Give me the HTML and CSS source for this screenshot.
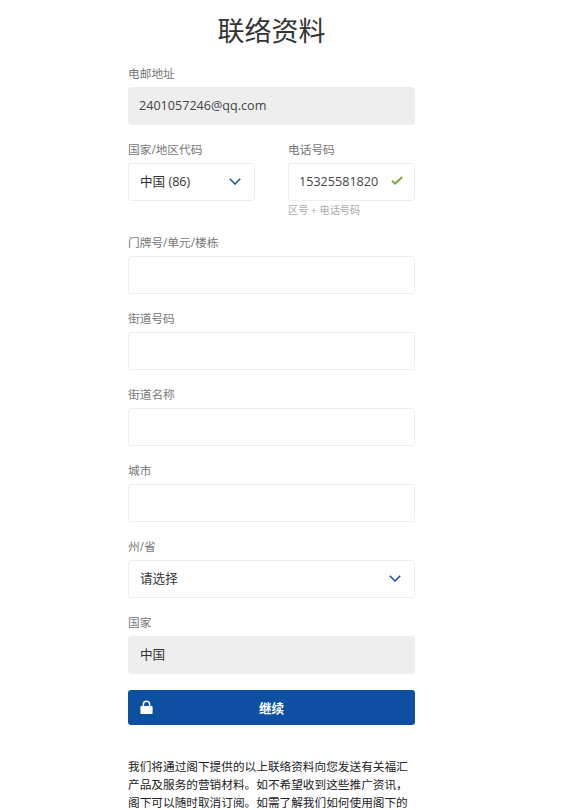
FILE: index.html
```html
<!DOCTYPE html>
<html lang="zh-CN">
<head>
    <meta charset="UTF-8">
    <meta name="viewport" content="width=device-width, initial-scale=1.0">
    <title>联络资料</title>
    <link rel="stylesheet" href="styles.css">
</head>
<body>
    <form class="form">
        <h1 class="title">联络资料</h1>

        <div class="group">
            <div class="label">电邮地址</div>
            <div class="field disabled latin">2401057246@qq.com</div>
        </div>

        <div class="row">
            <div class="group">
                <div class="label">国家/地区代码</div>
                <div class="field select">
                    <span>中国 (86)</span>
                    <svg class="chevron" viewBox="0 0 12 7"><path d="M.8.8 6 6 11.2.8"/></svg>
                </div>
            </div>
            <div class="group">
                <div class="label">电话号码</div>
                <div class="field phone latin">
                    <span>15325581820</span>
                    <svg class="check" viewBox="0 0 12 9"><path d="M1 4.8 4.2 7.6 11.2 1"/></svg>
                </div>
                <div class="hint">区号 + 电话号码</div>
            </div>
        </div>

        <div class="group">
            <div class="label">门牌号/单元/楼栋</div>
            <div class="field"></div>
        </div>
        <div class="group">
            <div class="label">街道号码</div>
            <div class="field"></div>
        </div>
        <div class="group">
            <div class="label">街道名称</div>
            <div class="field"></div>
        </div>
        <div class="group">
            <div class="label">城市</div>
            <div class="field"></div>
        </div>
        <div class="group">
            <div class="label">州/省</div>
            <div class="field select">
                <span>请选择</span>
                <svg class="chevron" viewBox="0 0 12 7"><path d="M.8.8 6 6 11.2.8"/></svg>
            </div>
        </div>
        <div class="group">
            <div class="label">国家</div>
            <div class="field disabled select">中国</div>
        </div>

        <button class="submit" type="button">
            <svg class="lock" viewBox="0 0 13 14"><path d="M2.6 6V4.4a3.9 3.9 0 0 1 7.8 0V6h1.2a1 1 0 0 1 1 1v6a1 1 0 0 1-1 1H1.4a1 1 0 0 1-1-1V7a1 1 0 0 1 1-1zm1.5 0h4.8V4.4a2.4 2.4 0 0 0-4.8 0z"/></svg>
            继续
        </button>

        <p class="notice">我们将通过阁下提供的以上联络资料向您发送有关福汇产品及服务的营销材料。如不希望收到这些推广资讯，阁下可以随时取消订阅。如需了解我们如何使用阁下的</p>
    </form>
</body>
</html>
```

FILE: styles.css
```css
html, body {
    height: 100%;
    overflow: hidden;
}

body {
    margin: 0;
    background: white;
    color: #333;
    font-family: "Open Sans", "Noto Sans CJK SC", sans-serif;
}

.form {
    width: 287px;
    margin-left: 128px;
}

.title {
    height: 65px;
    margin: 0;
    padding-top: 10px;
    box-sizing: border-box;
    text-align: center;
    font-size: 27px;
    font-weight: 400;
    line-height: 42px;
    color: #333;
}

.group {
    margin-bottom: 16px;
}

.label {
    height: 20px;
    margin-bottom: 2px;
    font-size: 11.7px;
    line-height: 16px;
    color: #777;
}

.field {
    display: flex;
    align-items: center;
    height: 38px;
    padding: 0 11px;
    box-sizing: border-box;
    border: 1px solid #eee;
    border-radius: 3px;
    background: white;
    font-size: 12.6px;
    color: #444;
}

.field.disabled {
    background: #eee;
}

.latin {
    padding-left: 10px;
    padding-bottom: 2px;
}

.select {
    justify-content: space-between;
    padding-bottom: 4px;
    color: #333;
}

.select .chevron {
    margin-top: 3px;
}

.phone {
    justify-content: space-between;
}

.row {
    display: flex;
    justify-content: space-between;
    margin-bottom: 16px;
}

.row .group {
    width: 127px;
    margin-bottom: 0;
}

.hint {
    height: 17px;
    font-size: 10.2px;
    line-height: 18px;
    color: #aaa;
}

.chevron {
    width: 12px;
    height: 7px;
    margin-right: 2px;
    fill: none;
    stroke: #1c5aa0;
    stroke-width: 1.6;
}

.check {
    width: 12px;
    height: 9px;
    margin-bottom: 1px;
    fill: none;
    stroke: #7eab3c;
    stroke-width: 2;
}

.submit {
    position: relative;
    display: block;
    width: 100%;
    height: 35px;
    padding: 0;
    border: none;
    border-radius: 3px;
    background: #0d50a2;
    color: white;
    font-family: inherit;
    font-size: 12.6px;
    font-weight: 700;
}

.lock {
    position: absolute;
    left: 12px;
    top: 10px;
    width: 13px;
    height: 14px;
    fill: white;
}

.notice {
    margin: 33px 0 0;
    font-size: 11.67px;
    line-height: 18px;
    color: #222;
}
```
